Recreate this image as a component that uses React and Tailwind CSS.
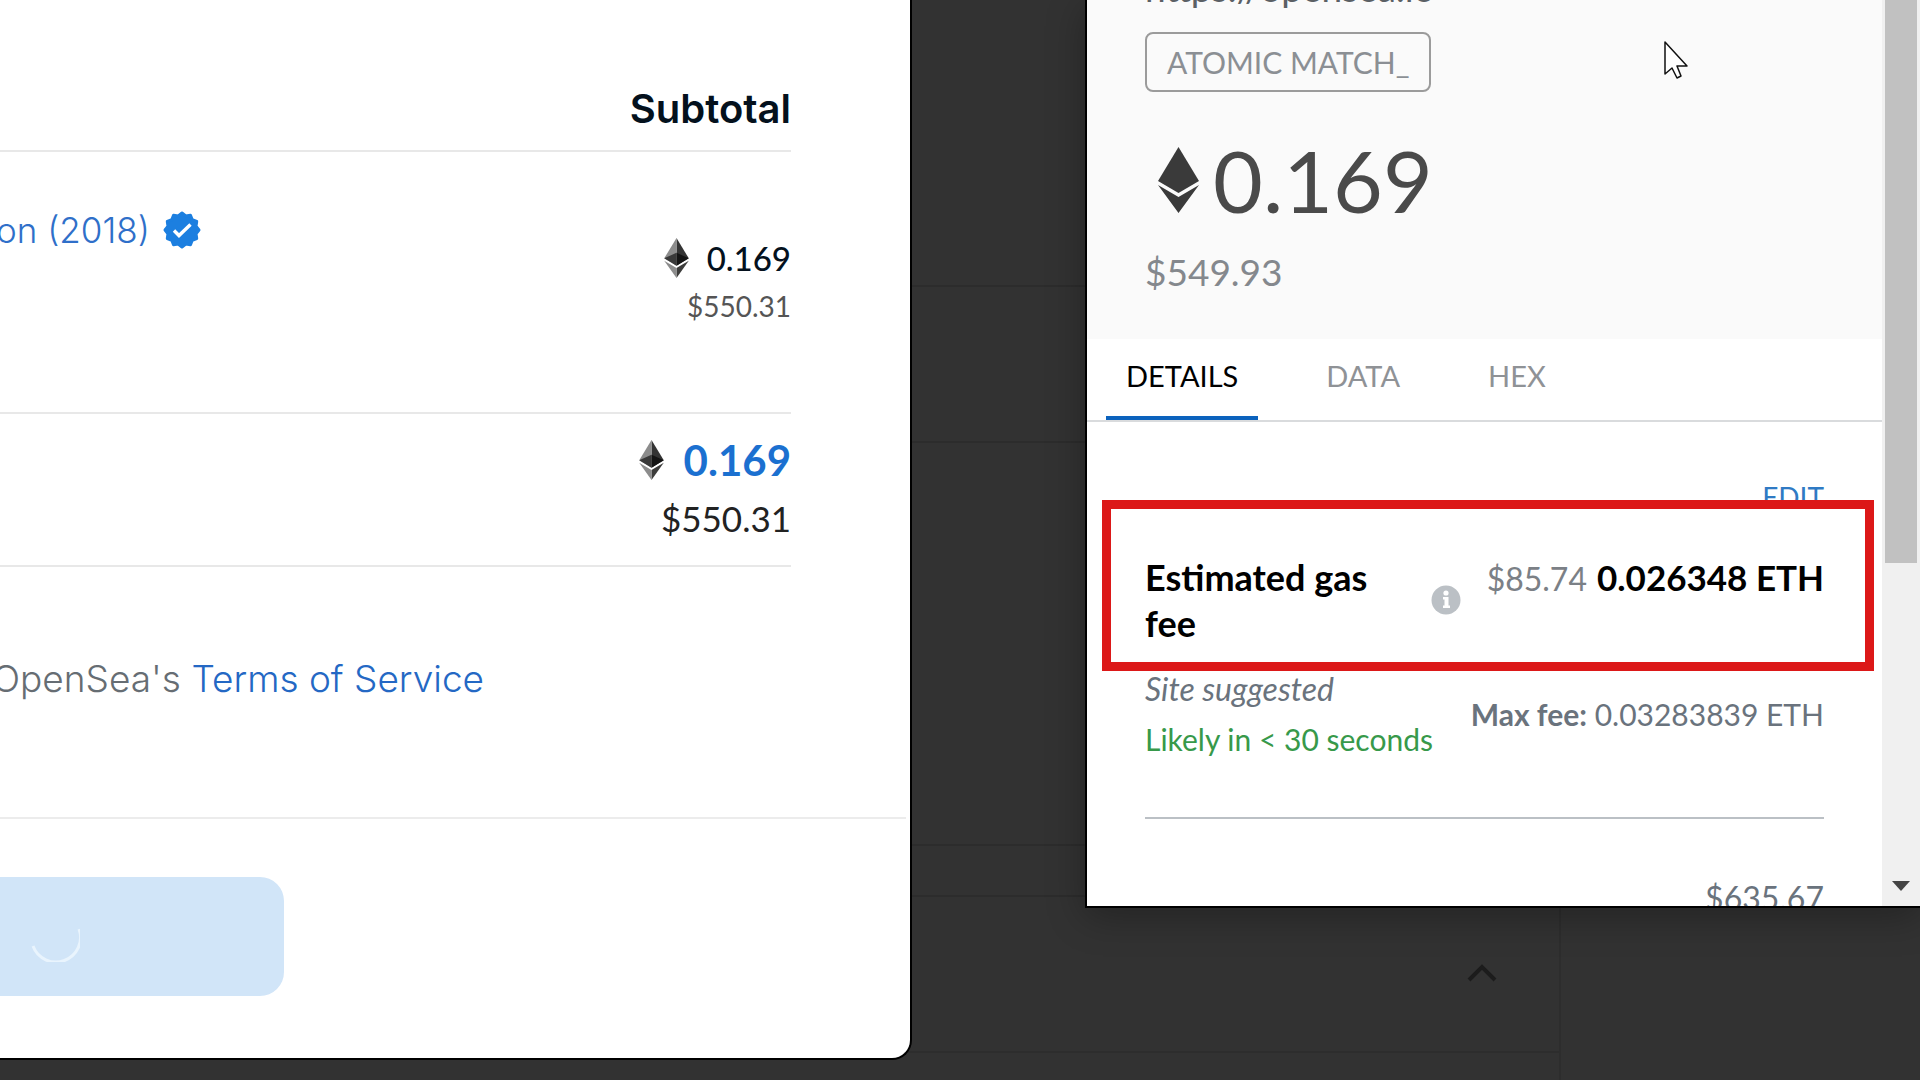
import React from "react";

const geo = "font-['Inter','Noto_Sans',sans-serif]";
const num = "font-['Lato','Noto_Sans',sans-serif]";

const tabs = ["DETAILS", "DATA", "HEX"];

// 12 lobe seal used by the verified badge
const sealPoints = Array.from({ length: 24 }, (_, i) => {
  const r = i % 2 === 0 ? 17 : 14.5;
  const a = (i * Math.PI) / 12 - Math.PI / 2;
  return `${(20 + r * Math.cos(a)).toFixed(2)},${(20 + r * Math.sin(a)).toFixed(2)}`;
}).join(" ");

function VerifiedBadge() {
  return (
    <svg viewBox="0 0 40 40" className="size-10" role="img" aria-label="Verified">
      <polygon
        points={sealPoints}
        fill="#1c7fe0"
        stroke="#1c7fe0"
        strokeWidth="3"
        strokeLinejoin="round"
      />
      <path d="M12 20.5 17 25.5 28.500 14.5" fill="none" stroke="#fff" strokeWidth="3.4" />
    </svg>
  );
}

function EthIcon() {
  return (
    <svg viewBox="0 0 256 417" className="h-10 w-[25px]" aria-hidden="true">
      <path d="M128 0v288l128-76z" fill="#343434" />
      <path d="M128 0 0 212l128 76z" fill="#8c8c8c" />
      <path d="M128 312v105l128-180z" fill="#3c3c3b" />
      <path d="M128 417V312L0 237z" fill="#8c8c8c" />
      <path d="m128 288 128-76-128-58z" fill="#141414" />
      <path d="m0 212 128 76V154z" fill="#393939" />
    </svg>
  );
}

function EthGlyph() {
  return (
    <svg viewBox="0 0 41 66" className="h-[66px] w-[41px]" fill="#3a3a3a" aria-hidden="true">
      <path d="M20.5 0 41 34 20.5 46 0 34z" />
      <path d="M0 38 20.5 50 41 38 20.5 66z" />
    </svg>
  );
}

function InfoIcon() {
  return (
    <svg viewBox="0 0 30 30" className="size-[30px] shrink-0" role="img" aria-label="Info">
      <circle cx="15" cy="15" r="14.5" fill="#bbc0c5" />
      <circle cx="15" cy="8" r="2.6" fill="#fff" />
      <path d="M12 12h5.500v8.500h1.500V23h-7v-2.500h1.500v-6H12z" fill="#fff" />
    </svg>
  );
}

// Dimmed page that sits behind the two windows
function Backdrop() {
  return (
    <div className="absolute inset-0 flex flex-col" aria-hidden="true">
      <div className="h-[287px] border-b-2 border-[#2c2c2c]" />
      <div className="h-[156px] border-b-2 border-[#2c2c2c]" />
      <div className="h-[403px] border-b-2 border-[#2c2c2c]" />
      <div className="h-[51px] border-b-2 border-[#2c2c2c]" />
      <div className="flex flex-1">
        <div className="w-[1561px] border-r-2 border-[#2d2d2d]">
          <div className="flex h-[156px] justify-end border-b-2 border-[#2d2d2d] pt-[64px] pr-[61px]">
            <svg viewBox="0 0 32 24" className="h-6 w-8">
              <path d="M3 19 16 6l13 13" fill="none" stroke="#1c1c1c" strokeWidth="4" />
            </svg>
          </div>
        </div>
      </div>
    </div>
  );
}

function Checkout() {
  return (
    <section
      className={`relative -ml-2 w-[920px] rounded-br-[20px] border-r-2 border-b-2 border-black bg-white ${geo}`}
    >
      <div className="mr-[119px]">
        <h2 className="border-b-2 border-[#e8e8e8] pt-[85px] pb-[17px] text-right text-[40px] leading-[48px] font-semibold text-[#04111d]">
          Subtotal
        </h2>

        {/* Item */}
        <div className="flex justify-between border-b-2 border-[#e8e8e8] pb-[82px]">
          <a
            href="#collection"
            className="flex items-center gap-3 self-start pt-[54px] pl-1 text-[35px] leading-[48px] font-light text-[#2f6fc9]"
          >
            on (2018)
            <VerifiedBadge />
          </a>
          <div className={`pt-[82px] text-right leading-[48px] ${num}`}>
            <div className="flex items-center justify-end gap-[18px] text-[33px] font-medium text-[#04111d]">
              <EthIcon />
              0.169
            </div>
            <div className="text-[28px] text-[#555]">$550.31</div>
          </div>
        </div>

        {/* Total */}
        <div className={`border-b-2 border-[#e8e8e8] pt-[18px] pb-[17px] text-right ${num}`}>
          <div className="flex items-center justify-end gap-5 text-[42px] leading-[56px] font-bold text-[#1b70d0]">
            <EthIcon />
            0.169
          </div>
          <div className="text-[35px] leading-[60px] text-[#222]">$550.31</div>
        </div>

        <p className="pt-[88px] pb-[114px] text-[37px] leading-[48px] font-light text-[#666d73]">
          OpenSea's{" "}
          <a href="#terms" className="text-[#2468c4]">
            Terms of Service
          </a>
        </p>
      </div>

      <div className="mr-1 border-t-2 border-[#ececec] pt-[58px] pb-[62px]">
        <button
          type="button"
          aria-label="Confirming"
          className="flex h-[119px] w-[292px] items-center rounded-r-[24px] bg-[#d1e5f8] pl-[38px]"
        >
          <svg viewBox="0 0 50 50" className="size-[50px]">
            <path d="M49 17A24 24 0 0 1 3 34" fill="none" stroke="#e9f4fd" strokeWidth="3" />
          </svg>
        </button>
      </div>
    </section>
  );
}

function Wallet() {
  return (
    <section
      className={`relative flex h-[908px] w-[835px] overflow-hidden border-b-2 border-l-2 border-black bg-white shadow-[0_8px_36px_rgba(0,0,0,0.3)] ${num}`}
    >
      <div className="flex-1">
        <header className="-mt-8 bg-[#fafafa] px-[58px] pb-[43px]">
          <div className="text-[37px] leading-[40px] text-[#5b6065]">https://opensea.io</div>
          <span className="mt-6 inline-block rounded-lg border-2 border-[#9b9b9b] px-5 text-[30px] leading-[56px] text-[#8b8f94]">
            ATOMIC MATCH_
          </span>
          <div className="mt-[42px] flex items-center gap-[14px] pl-[13px] text-[86px] leading-[92px] text-[#4a4a4a]">
            <EthGlyph />
            0.169
          </div>
          <div className="mt-[22px] text-[37px] leading-[48px] text-[#84888d]">$549.93</div>
        </header>

        <nav className="flex gap-12 border-b-2 border-[#d9dbdd] px-[19px]">
          {tabs.map((tab, i) => (
            <button
              key={tab}
              type="button"
              className={
                i === 0
                  ? "border-b-4 border-[#0b62bd] px-5 pt-[13px] pb-4 text-[29px] leading-[48px] text-black"
                  : "border-b-4 border-transparent px-5 pt-[13px] pb-4 text-[29px] leading-[48px] text-[#8f9296]"
              }
            >
              {tab}
            </button>
          ))}
        </nav>

        <div className="px-[58px] pt-[55px]">
          <div className="flex justify-end text-[28px] leading-[40px]">
            <button type="button" className="text-[#2f7ac4]">
              EDIT
            </button>
          </div>

          <div className="mt-[37px] flex items-center leading-[46px]">
            <div className="w-[286px] pr-10 text-[36px] font-bold text-black">Estimated gas fee</div>
            <InfoIcon />
            <div className="ml-auto flex items-baseline gap-[10px] self-start text-[32px] whitespace-nowrap">
              <span className="text-[#7b8086]">$85.74</span>
              <span className="text-[35px] font-bold text-black">0.026348 ETH</span>
            </div>
          </div>

          <div className="mt-[18px] flex items-center justify-between pb-[53px] text-[30px] leading-[50px] whitespace-nowrap">
            <div>
              <div className="text-[32px] text-[#6a737d] italic">Site suggested</div>
              <div className="text-[#37994a]">Likely in &lt; 30 seconds</div>
            </div>
            <div className="text-[#6a737d]">
              <strong>Max fee:</strong> 0.03283839 ETH
            </div>
          </div>

          <div className="border-t-2 border-[#bbc0c5] pt-[55px] text-right text-[32px] leading-[48px] text-[#6a737d]">
            $635.67
          </div>
        </div>
      </div>

      {/* Scrollbar */}
      <div className="flex w-[38px] flex-col items-center justify-between bg-[#f0f0f0] pb-[15px]">
        <div className="h-[563px] w-8 bg-[#c1c1c1]" />
        <svg viewBox="0 0 18 10" className="h-[10px] w-[18px]" aria-hidden="true">
          <path d="M0 0h18L9 10z" fill="#444" />
        </svg>
      </div>

      {/* Highlight round the gas fee */}
      <div className="pointer-events-none absolute top-[500px] right-[46px] left-[15px] h-[171px] border-[9px] border-[#dc1818]" />
    </section>
  );
}

function Pointer() {
  return (
    <svg
      viewBox="0 0 24 38"
      className="pointer-events-none absolute top-[41px] left-[1664px] h-[38px] w-6"
      aria-hidden="true"
    >
      <path
        d="M1 1v32l7-6 5 10 4-2-4-10h10z"
        fill="#fff"
        stroke="#111"
        strokeWidth="1.5"
        strokeLinejoin="round"
      />
    </svg>
  );
}

export default function App() {
  return (
    <main className="relative min-h-screen overflow-hidden bg-[#323232]">
      <Backdrop />
      <div className="flex items-start justify-between">
        <Checkout />
        <Wallet />
      </div>
      <Pointer />
    </main>
  );
}
